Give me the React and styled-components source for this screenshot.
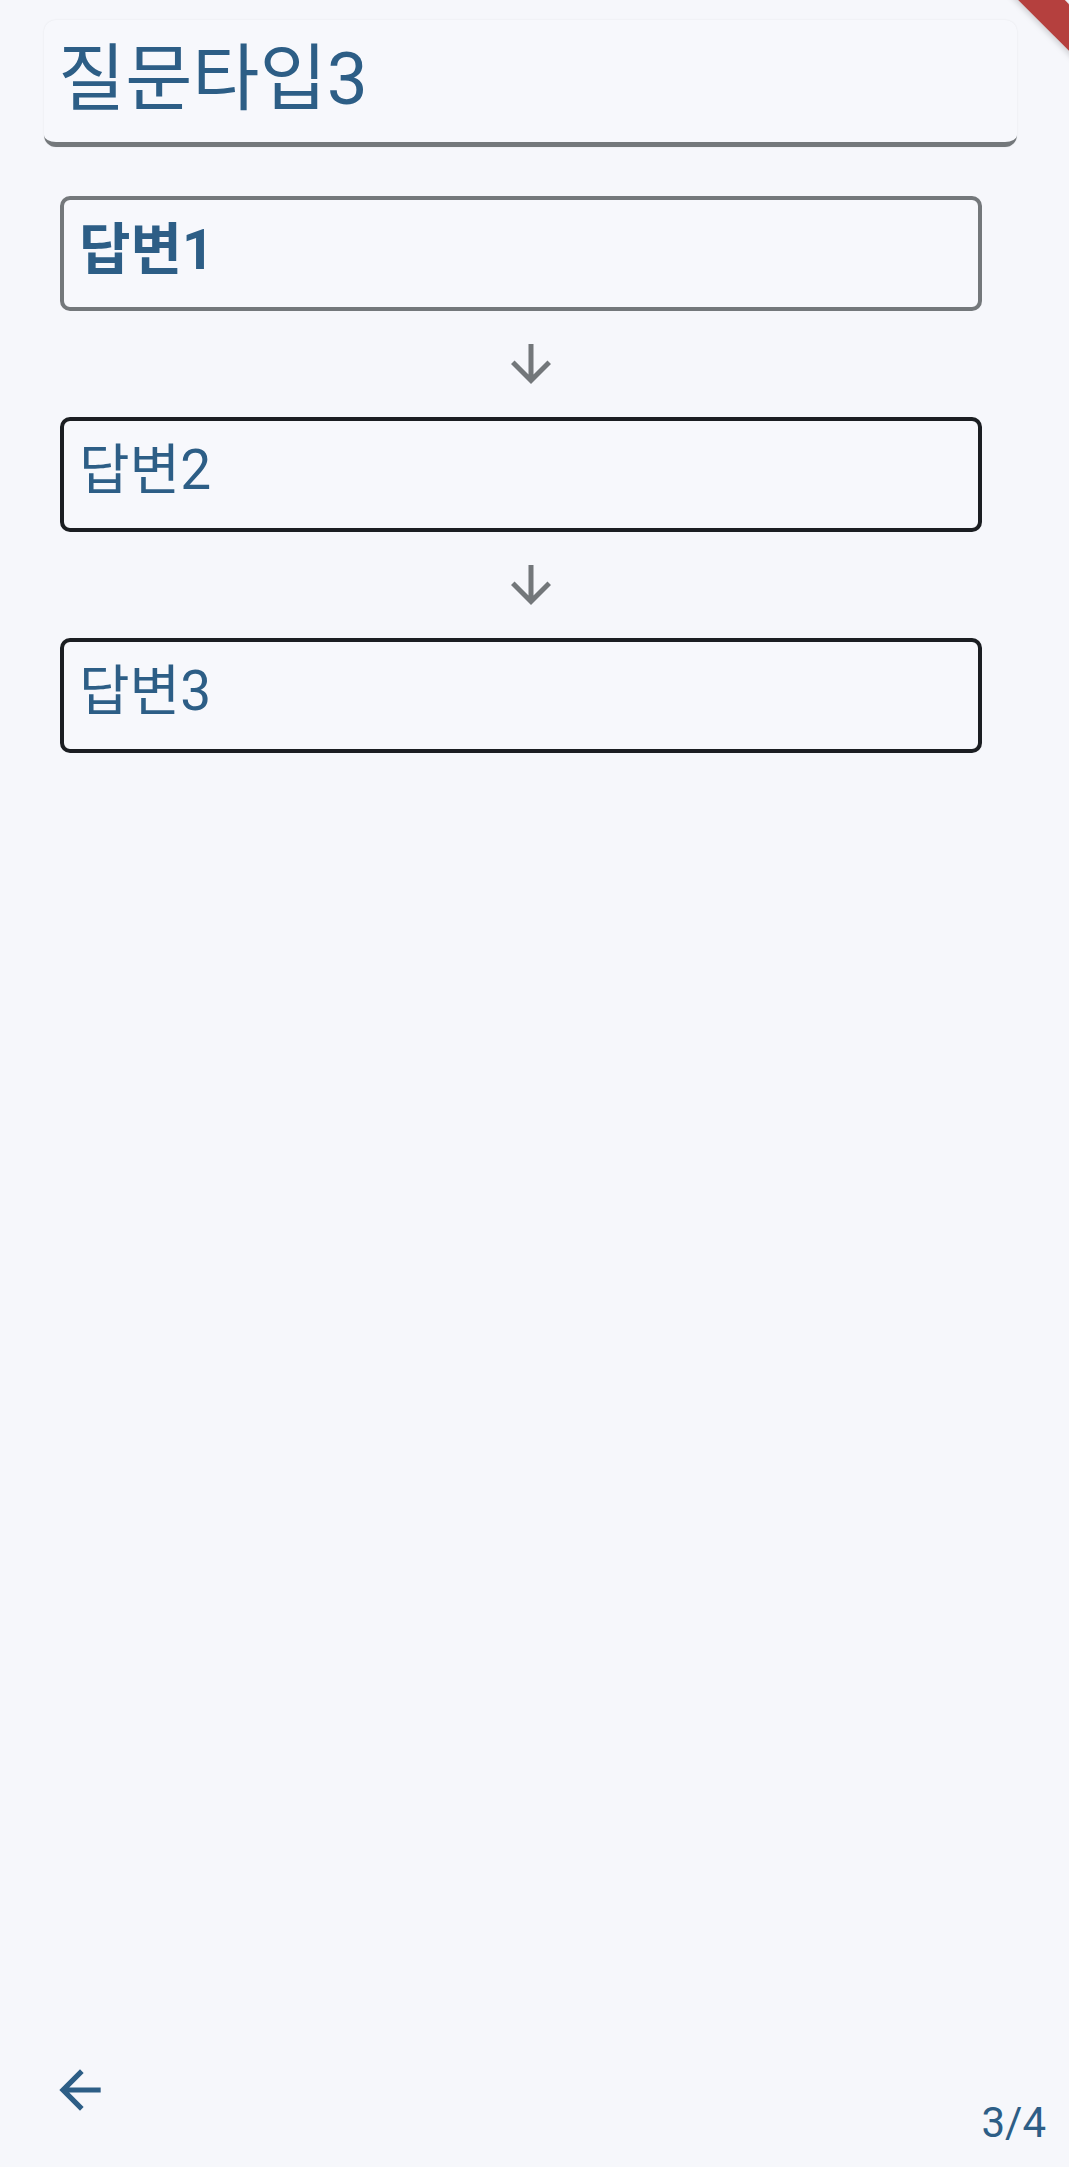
import React from "react";
import styled, { createGlobalStyle } from "styled-components";

const GlobalStyle = createGlobalStyle`
  html, body {
    margin: 0;
    padding: 0;
    background: #f6f7fb;
    font-family: Roboto, "Noto Sans CJK KR", sans-serif;
  }
`;

const Page = styled.div`
  position: relative;
  min-height: 100vh;
  display: flex;
  flex-direction: column;
  overflow: hidden;
  background: #f6f7fb;
`;

const DebugBanner = styled.div`
  position: absolute;
  top: 11px;
  right: -120px;
  width: 240px;
  height: 33px;
  background: #b5403e;
  transform: rotate(45deg);
  transform-origin: center;
  box-shadow: 0 2px 6px rgba(0, 0, 0, 0.18);
`;

const HeaderCard = styled.div`
  margin: 20px 52px 0 44px;
  height: 118px;
  display: flex;
  align-items: center;
  padding: 0 16px 4px 14px;
  background: #f7f8fc;
  border-radius: 12px;
  border-bottom: 5px solid #74787b;
  box-shadow: 0 0 2px rgba(0, 0, 0, 0.08);
`;

const Title = styled.h1`
  margin: 0;
  font-size: 73px;
  font-weight: 400;
  line-height: 1;
  color: #2d5e86;
`;

const AnswerList = styled.div`
  display: flex;
  flex-direction: column;
  margin: 49px 87px 0 60px;
`;

const AnswerBox = styled.div`
  box-sizing: border-box;
  height: 115px;
  display: flex;
  align-items: center;
  padding: 0 16px 8px 15px;
  border: 4px solid ${(p) => (p.$active ? "#74787b" : "#1b1e22")};
  border-radius: 10px;
  background: #f7f8fc;
`;

const AnswerText = styled.span`
  font-size: ${(p) => (p.$bold ? 56 : 55)}px;
  line-height: 1;
  color: #2d5e86;
  font-weight: ${(p) => (p.$bold ? 700 : 400)};
`;

const ArrowRow = styled.div`
  height: 106px;
  display: flex;
  align-items: center;
  justify-content: center;
  padding-left: 20px;
  color: #73777a;
`;

const Footer = styled.div`
  margin-top: auto;
  display: flex;
  justify-content: space-between;
  align-items: flex-end;
  padding: 0 23px 23px 49px;
`;

const BackButton = styled.button`
  border: none;
  background: none;
  padding: 0;
  margin-bottom: 23px;
  width: 62px;
  height: 62px;
  color: #2d5e86;
  display: flex;
  cursor: pointer;
`;

const PageCount = styled.span`
  font-size: 42px;
  line-height: 1;
  color: #2d5e86;
`;

const DownArrow = () => (
  <svg width="60" height="60" viewBox="0 0 24 24" fill="currentColor">
    <path d="M20 12l-1.41-1.41L13 16.17V4h-2v12.17l-5.58-5.59L4 12l8 8 8-8z" />
  </svg>
);

const BackArrow = () => (
  <svg width="62" height="62" viewBox="0 0 24 24" fill="currentColor">
    <path d="M20 11H7.830l5.59-5.59L12 4l-8 8 8 8 1.41-1.41L7.83 13H20v-2z" />
  </svg>
);

const answers = ["답변1", "답변2", "답변3"];

export default function App() {
  return (
    <Page>
      <GlobalStyle />
      <HeaderCard>
        <Title>질문타입3</Title>
      </HeaderCard>
      <AnswerList>
        {answers.map((a, i) => (
          <React.Fragment key={a}>
            {i > 0 && (
              <ArrowRow>
                <DownArrow />
              </ArrowRow>
            )}
            <AnswerBox $active={i === 0}>
              <AnswerText $bold={i === 0}>{a}</AnswerText>
            </AnswerBox>
          </React.Fragment>
        ))}
      </AnswerList>
      <Footer>
        <BackButton aria-label="back">
          <BackArrow />
        </BackButton>
        <PageCount>3/4</PageCount>
      </Footer>
      <DebugBanner />
    </Page>
  );
}
